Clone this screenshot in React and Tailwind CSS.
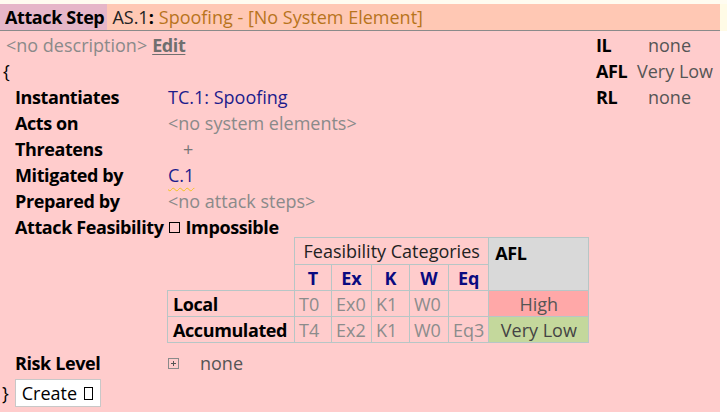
import React from "react";

const B = "font-bold tracking-[-0.4px] text-black";

function Row({ label, children, h = "h-[26px]" }) {
  return (
    <div className={`flex items-center ${h}`}>
      <div className={`w-[153px] shrink-0 ${B}`}>{label}</div>
      <div className="flex items-center">{children}</div>
    </div>
  );
}

export default function App() {
  const td = "border border-[#b7c6c6] px-[4px] h-[26px]";
  return (
    <div className="w-[727px] h-[418px] bg-white text-[18px] leading-none font-['Open_Sans','Noto_Sans',sans-serif]">
      {/* top strip */}
      <div className="h-[4px] bg-[#fffcf0]"></div>
      {/* header */}
      <div className="flex h-[27px]">
        <div className="w-[720px] flex items-stretch bg-[#ffc8b4] border-b-[1.5px] border-[#8a8a8a]">
          <div className={`bg-[#e6b6c8] pl-[5px] pr-[3px] flex items-center ${B}`}>Attack Step</div>
          <div className="flex items-center pl-[5px] text-[#b8741c]">
            <span className="text-[#222]">AS.1</span>
            <span className="font-bold text-black">:</span>
            <span className="pl-[5px]">Spoofing - [No System Element]</span>
          </div>
        </div>
        <div className="flex-1 bg-[#fffbe6]"></div>
      </div>
      {/* content */}
      <div className="w-[720px] h-[381px] bg-[#ffcccc] flex">
        <div className="flex-1 flex flex-col">
          <div className="h-[27px] flex items-center pl-[6px] pt-[1px]">
            <span className="text-[#8a8a8a]">&lt;no description&gt;</span>
            <span className="ml-[5px] font-bold tracking-[-0.4px] text-[#6f6f6f] underline underline-offset-2">Edit</span>
          </div>
          <div className="h-[26px] flex items-center pl-[3px] text-black">{"{"}</div>
          <div className="pl-[15px]">
            <Row label="Instantiates"><span className="text-[#1c1c8c]">TC.1: Spoofing</span></Row>
            <Row label="Acts on"><span className="text-[#8a8a8a]">&lt;no system elements&gt;</span></Row>
            <Row label="Threatens"><span className="text-[#777] pl-[15px]">+</span></Row>
            <Row label="Mitigated by">
              <span className="text-[#1c1c8c] underline decoration-wavy decoration-[#f2c21c] underline-offset-[5px] decoration-1">C.1</span>
            </Row>
            <Row label="Prepared by"><span className="text-[#8a8a8a]">&lt;no attack steps&gt;</span></Row>
            <div className="flex items-center h-[26px]">
              <span className={B}>Attack Feasibility</span>
              <span className="ml-[5px] w-[11px] h-[11px] border-[1.5px] border-black inline-block"></span>
              <span className={`ml-[6px] ${B}`}>Impossible</span>
            </div>
            <table className="ml-[152px] -mt-[3px] border-collapse">
              <tbody>
                <tr className="h-[27px]">
                  <td rowSpan={2} className="w-[127px] p-0"></td>
                  <td colSpan={5} className={`${td} text-center text-[#222]`}>Feasibility Categories</td>
                  <td rowSpan={2} className={`border border-[#b7c6c6] bg-[#d9d9d9] align-top pt-[6px] pl-[6px] w-[100px] ${B}`}>AFL</td>
                </tr>
                <tr className="h-[25px] font-bold text-[#0a0a80] text-center">
                  <td className={`${td} w-[37px]`}>T</td>
                  <td className={`${td} w-[40px]`}>Ex</td>
                  <td className={`${td} w-[38px]`}>K</td>
                  <td className={`${td} w-[39px]`}>W</td>
                  <td className={`${td} w-[40px]`}>Eq</td>
                </tr>
                <tr className="text-[#8c8c8c]">
                  <td className={`${td} ${B} pl-[5px]`}>Local</td>
                  <td className={td}>T0</td>
                  <td className={td}>Ex0</td>
                  <td className={td}>K1</td>
                  <td className={td}>W0</td>
                  <td className={td}></td>
                  <td className={`${td} bg-[#ffa8a8] text-[#555] text-center`}>High</td>
                </tr>
                <tr className="text-[#8c8c8c]">
                  <td className={`${td} ${B} pl-[5px]`}>Accumulated</td>
                  <td className={td}>T4</td>
                  <td className={td}>Ex2</td>
                  <td className={td}>K1</td>
                  <td className={td}>W0</td>
                  <td className={td}>Eq3</td>
                  <td className={`${td} bg-[#c4d89c] text-[#444] text-center`}>Very Low</td>
                </tr>
              </tbody>
            </table>
            <div className="flex items-center h-[26px] mt-[7px]">
              <div className={`w-[153px] ${B}`}>Risk Level</div>
              <svg width="11" height="11" viewBox="0 0 11 11" className="shrink-0">
                <rect x="0.5" y="0.5" width="10" height="10" fill="none" stroke="#8a8a8a" />
                <path d="M3 5.5H8M5.5 3V8" stroke="#555" />
              </svg>
              <span className="ml-[21px] text-[#555]">none</span>
            </div>
          </div>
          <div className="flex items-center mt-[3px] pl-[2px]">
            <span className="text-black">{"}"}</span>
            <div className="ml-[6px] h-[28px] w-[86px] pl-[6px] bg-white border border-[#c8c8c8] flex items-center text-black">
              Create
              <span className="ml-[7px] w-[9px] h-[13px] border-[1.5px] border-black inline-block"></span>
            </div>
          </div>
        </div>
        <div className="w-[124px] pt-[1px]">
          <div className="grid grid-cols-[41px_1fr]">
            <div className={`h-[26px] flex items-center ${B}`}>IL</div>
            <div className="h-[26px] flex items-center pl-[11px] text-[#555]">none</div>
            <div className={`h-[26px] flex items-center ${B}`}>AFL</div>
            <div className="h-[26px] flex items-center text-[#555]">Very Low</div>
            <div className={`h-[26px] flex items-center ${B}`}>RL</div>
            <div className="h-[26px] flex items-center pl-[11px] text-[#555]">none</div>
          </div>
        </div>
      </div>
    </div>
  );
}
